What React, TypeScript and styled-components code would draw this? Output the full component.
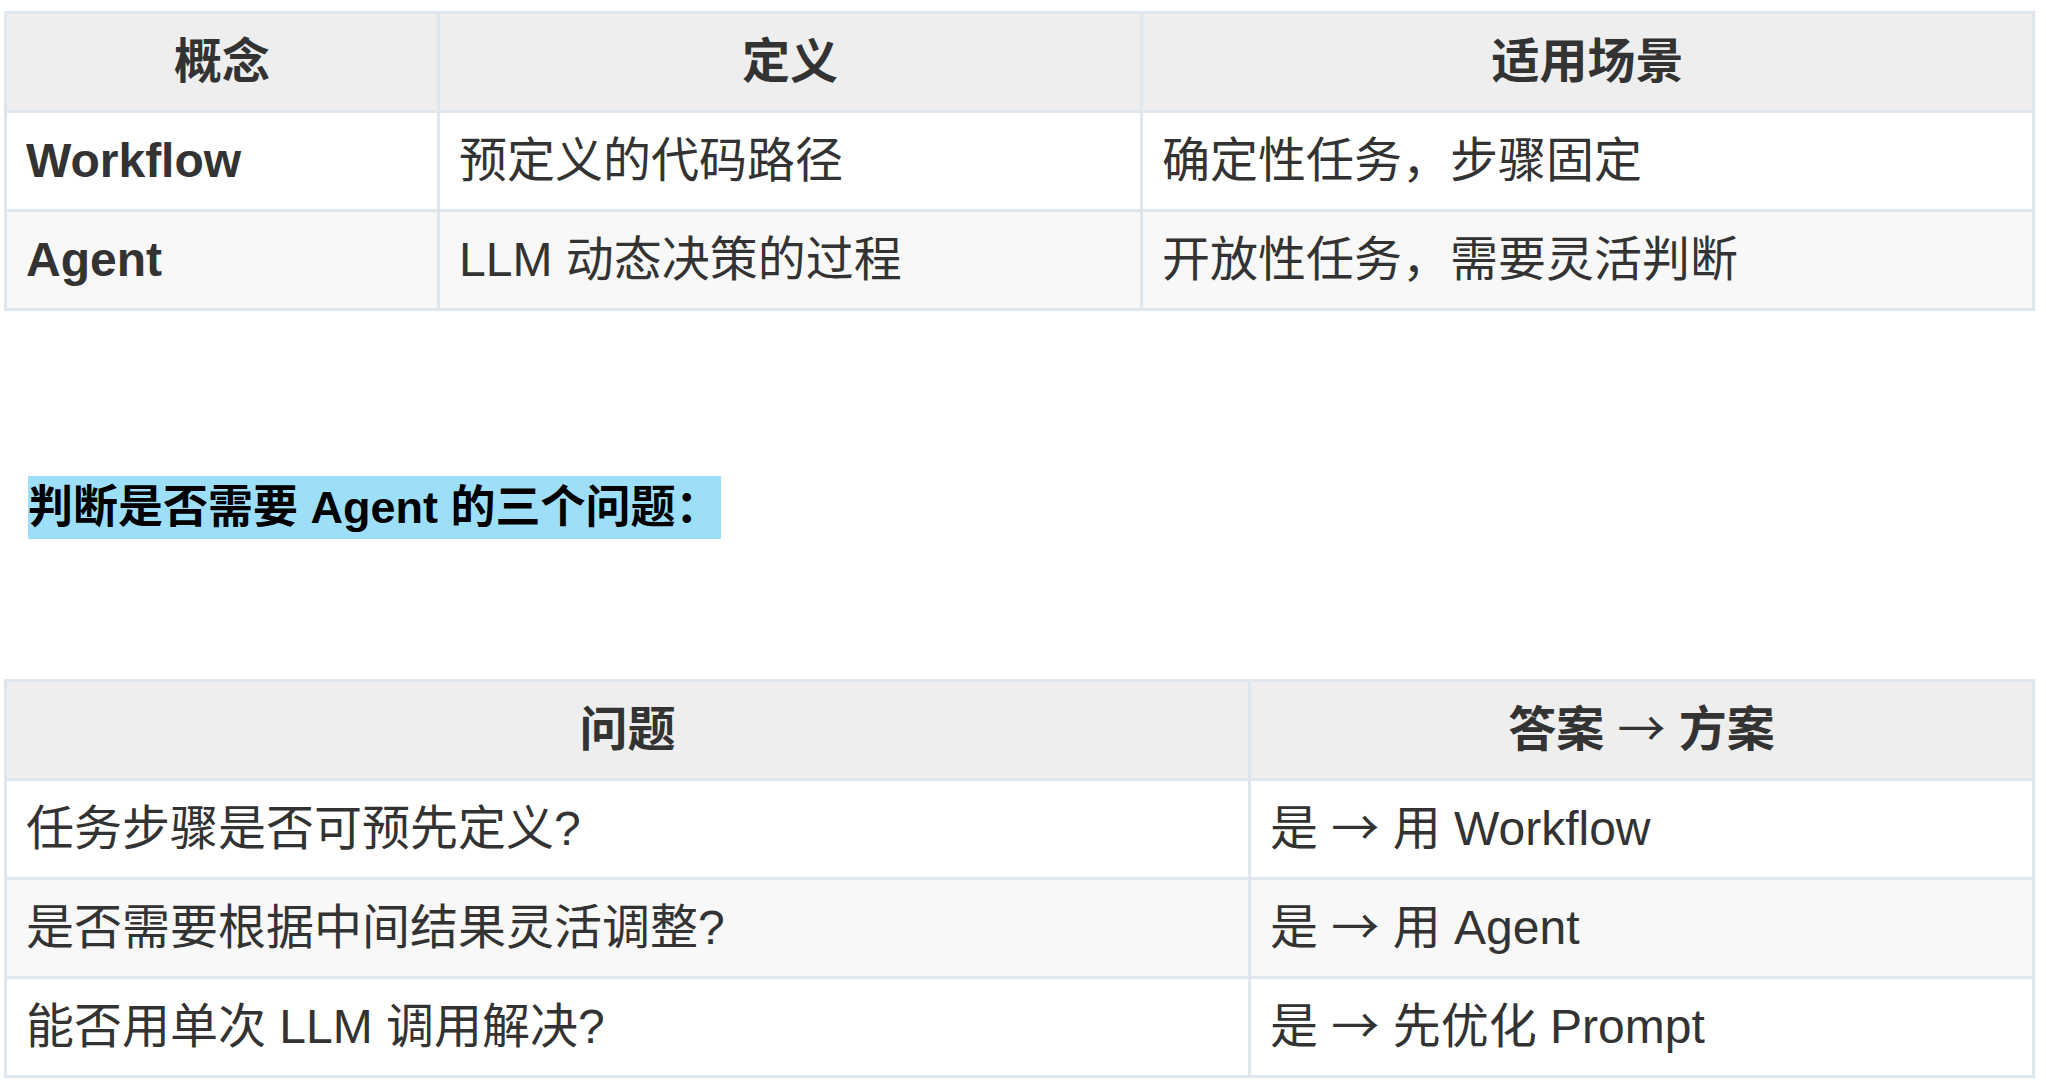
import React from 'react';
import styled, { createGlobalStyle } from 'styled-components';

const GlobalStyle = createGlobalStyle`
  body {
    margin: 0;
    background: #ffffff;
    font-family: "Liberation Sans", "Noto Sans CJK SC", sans-serif;
    color: #333333;
  }
`;

const Page = styled.div`
  padding: 11px 11px 0 4px;
`;

const Table = styled.table`
  width: 2031px;
  table-layout: fixed;
  border-collapse: separate;
  border-spacing: 0;
  border-top: 3px solid #dfe6ee;
  border-left: 3px solid #dfe6ee;
`;

const Col = styled.col<{ $w: number }>`
  width: ${(p) => p.$w}px;
`;

const Row = styled.tr<{ $striped?: boolean }>`
  background: ${(p) => (p.$striped ? '#f8f8f8' : '#ffffff')};
`;

const HeadRow = styled.tr`
  background: #eeeeee;
`;

const HeadCell = styled.th`
  box-sizing: border-box;
  padding: 12px 19px;
  font-size: 48px;
  line-height: 72px;
  font-weight: bold;
  text-align: center;
  color: #333333;
  border-right: 3px solid #dfe6ee;
  border-bottom: 3px solid #dfe6ee;
`;

const Cell = styled.td<{ $bold?: boolean }>`
  box-sizing: border-box;
  padding: 12px 19px;
  font-size: 48px;
  line-height: 72px;
  font-weight: ${(p) => (p.$bold ? 'bold' : 'normal')};
  color: #333333;
  white-space: nowrap;
  border-right: 3px solid #dfe6ee;
  border-bottom: 3px solid #dfe6ee;
`;

const Arrow = styled.span`
  font-family: "Noto Sans CJK SC", sans-serif;
  font-weight: normal;
  line-height: 0;
`;

const Heading = styled.div`
  display: flex;
  margin: 165px 0 140px 24px;
`;

const Mark = styled.span`
  height: 63px;
  line-height: 63px;
  background: #9ddff9;
  font-size: 45px;
  font-weight: bold;
  color: #000000;
`;

const concepts = [
  { name: 'Workflow', def: '预定义的代码路径', use: '确定性任务，步骤固定' },
  { name: 'Agent', def: 'LLM 动态决策的过程', use: '开放性任务，需要灵活判断' },
];

const questions = [
  { q: '任务步骤是否可预先定义?', to: '用 Workflow' },
  { q: '是否需要根据中间结果灵活调整?', to: '用 Agent' },
  { q: '能否用单次 LLM 调用解决?', to: '先优化 Prompt' },
];

export default function App() {
  return (
    <Page>
      <GlobalStyle />

      <Table>
        <colgroup>
          <Col $w={433} />
          <Col $w={703} />
          <Col $w={892} />
        </colgroup>
        <thead>
          <HeadRow>
            <HeadCell>概念</HeadCell>
            <HeadCell>定义</HeadCell>
            <HeadCell>适用场景</HeadCell>
          </HeadRow>
        </thead>
        <tbody>
          {concepts.map((c, i) => (
            <Row key={c.name} $striped={i % 2 === 1}>
              <Cell $bold>{c.name}</Cell>
              <Cell>{c.def}</Cell>
              <Cell>{c.use}</Cell>
            </Row>
          ))}
        </tbody>
      </Table>

      <Heading>
        <Mark>判断是否需要 Agent 的三个问题：</Mark>
      </Heading>

      <Table>
        <colgroup>
          <Col $w={1244} />
          <Col $w={784} />
        </colgroup>
        <thead>
          <HeadRow>
            <HeadCell>问题</HeadCell>
            <HeadCell>
              答案 <Arrow>→</Arrow> 方案
            </HeadCell>
          </HeadRow>
        </thead>
        <tbody>
          {questions.map((r, i) => (
            <Row key={r.q} $striped={i % 2 === 1}>
              <Cell>{r.q}</Cell>
              <Cell>
                是 <Arrow>→</Arrow> {r.to}
              </Cell>
            </Row>
          ))}
        </tbody>
      </Table>
    </Page>
  );
}
